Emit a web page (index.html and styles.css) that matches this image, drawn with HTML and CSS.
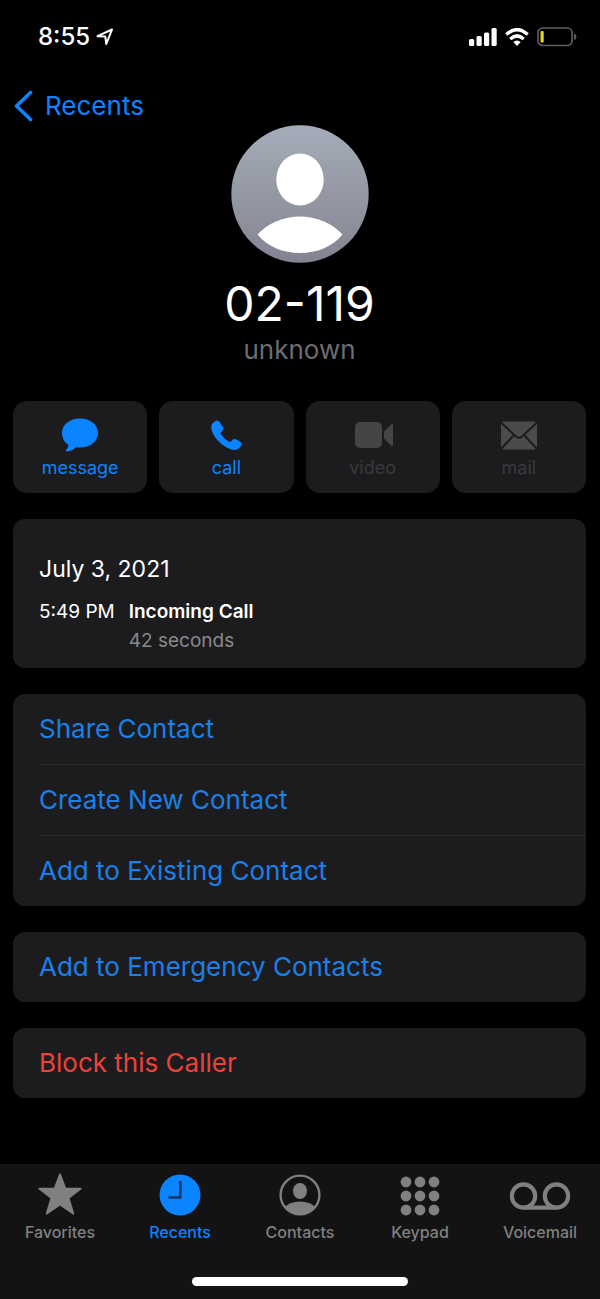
FILE: index.html
```html
<!DOCTYPE html>
<html lang="en">
<head>
<meta charset="utf-8">
<meta name="viewport" content="width=device-width, initial-scale=1">
<title>02-119</title>
<link rel="stylesheet" href="styles.css">
</head>
<body>
<div class="screen">
  <header class="status">
    <div class="status-group location">
      <time class="clock">8:55</time>
      <svg width="18" height="18" viewBox="0 0 18 18" fill="none" stroke="#fff" stroke-width="2" stroke-linejoin="round"><path d="M1.500 8.200 16 1.500 10.300 16 9.300 8.600Z"/></svg>
    </div>
    <div class="status-group">
      <svg width="28" height="18" viewBox="0 0 28 18" fill="#fff"><rect x="0" y="11" width="5.200" height="7" rx="1.500"/><rect x="7.500" y="8" width="5.200" height="10" rx="1.500"/><rect x="15" y="4.500" width="5.200" height="13.500" rx="1.500"/><rect x="22.500" y="0" width="5.200" height="18" rx="1.500"/></svg>
      <svg width="24" height="18" viewBox="0 0 24 18" fill="none" stroke="#fff" stroke-width="3.400"><path d="M1.300 6.500Q12-3.200 22.700 6.500"/><path d="M5.300 11Q12 4.800 18.700 11"/><path fill="#fff" stroke="none" d="M8.300 14.100Q12 11 15.700 14.100L12 18Z"/></svg>
      <svg width="40" height="20" viewBox="0 0 40 20"><rect x="1" y="1" width="34" height="17.500" rx="4.500" fill="none" stroke="#5d5d5d" stroke-width="1.700"/><rect x="3.500" y="4" width="3.200" height="11.500" rx="1" fill="#e4d51f"/><path d="M37 6.500Q39.500 7.200 39.500 9.800T37 13Z" fill="#5d5d5d"/></svg>
    </div>
  </header>

  <nav class="navbar">
    <a class="back" href="#recents">
      <svg width="19" height="32" viewBox="0 0 19 32" fill="none" stroke="#0a84ff" stroke-width="3.600" stroke-linecap="round" stroke-linejoin="round"><path d="M16.500 2.500 2.500 16 16.500 29.500"/></svg>
      Recents
    </a>
  </nav>

  <main class="content">
    <section class="profile">
      <svg class="avatar" viewBox="0 0 138 138">
        <defs><linearGradient id="shade" x1="0" y1="0" x2="0" y2="1"><stop offset="0" stop-color="#a6acb9"/><stop offset="1" stop-color="#838491"/></linearGradient></defs>
        <circle cx="69" cy="69" r="68.700" fill="url(#shade)"/>
        <ellipse cx="69" cy="54.500" rx="23.700" ry="26" fill="#fff"/>
        <path fill="#fff" d="M26.500 109.500C37 98 53 91.500 69 91.500S101 98 111.500 109.500C101 122 86 128 69 128S37 122 26.500 109.500Z"/>
      </svg>
      <h1 class="name">02-119</h1>
      <p class="label">unknown</p>
    </section>

    <div class="actions">
      <button class="action" type="button">
        <svg width="40" height="36" viewBox="0 0 40 36" fill="currentColor"><path d="M20 1.500C30.500 1.500 38 7.800 38 16S30.500 30.500 20 30.500Q18 30.500 16.300 30.200C13 33 9.500 34.500 6.500 34.500Q5 34 6.300 32.700 8.500 30.500 8.600 28C4.500 25.500 2 21 2 16 2 7.800 9.500 1.500 20 1.500Z"/></svg>
        message
      </button>
      <button class="action" type="button">
        <svg width="40" height="36" viewBox="0 0 40 36" fill="currentColor"><path d="M6.700 6.300 9.300 4Q11.500 2.500 13.400 4.800L17 10Q18.300 12.200 16.300 13.900L14.900 15.200Q14.300 16 15 17.200 18 22 23.300 24.700 24.200 25.100 25 24.400L26.500 22.800Q28.300 21.200 30.500 22.500L34.500 25.100Q36.600 26.800 35 29L32.700 31.600Q29.500 34.400 23.500 31.800C14.700 28 7.800 20.300 5.600 13.200Q4.500 8.700 6.700 6.300Z"/></svg>
        call
      </button>
      <button class="action" type="button" disabled>
        <svg width="40" height="36" viewBox="0 0 40 36" fill="#454547"><rect x="2" y="5" width="27" height="26" rx="5"/><path d="M31 14.500 38 7.500Q40 6 40 8.500V27.500Q40 30 38 28.500L31 21.500Z"/></svg>
        video
      </button>
      <button class="action" type="button" disabled>
        <svg width="40" height="36" viewBox="0 0 40 36"><rect x="2" y="4.500" width="36" height="28" rx="3" fill="#4b4b4d"/><path d="M2 5.500 17 19.500Q20 22 23 19.500L38 5.500M2 32 15 18M38 32 25 18" fill="none" stroke="#1c1c1e" stroke-width="2"/></svg>
        mail
      </button>
    </div>

    <section class="card history">
      <h2 class="date">July 3, 2021</h2>
      <div class="entry">
        <time>5:49 PM</time>
        <div><strong class="kind">Incoming Call</strong><p class="duration">42 seconds</p></div>
      </div>
    </section>

    <div class="card">
      <button class="row" type="button">Share Contact</button>
      <button class="row" type="button">Create New Contact</button>
      <button class="row" type="button">Add to Existing Contact</button>
    </div>
    <div class="card">
      <button class="row" type="button">Add to Emergency Contacts</button>
    </div>
    <div class="card">
      <button class="row danger" type="button">Block this Caller</button>
    </div>
  </main>

  <footer class="dock">
    <nav class="tabs">
      <a class="tab" href="#favorites">
        <svg width="46" height="44" viewBox="0 0 46 44" fill="currentColor" stroke="currentColor" stroke-width="2" stroke-linejoin="round"><path d="M23 2.500 28.300 16.700H43.500L31.500 26 36.200 41.500 23 32.500 9.800 41.500 14.500 26 2.500 16.700H17.700Z"/></svg>
        Favorites
      </a>
      <a class="tab active" href="#recents" aria-current="page">
        <svg width="42" height="44" viewBox="0 0 42 44"><circle cx="21" cy="23" r="20.500" fill="currentColor"/><path d="M21.300 9V25.500H9.500" fill="none" stroke="#0d3668" stroke-width="2.600"/></svg>
        Recents
      </a>
      <a class="tab" href="#contacts">
        <svg width="42" height="44" viewBox="0 0 42 44"><defs><clipPath id="ring"><circle cx="21" cy="23" r="19.500"/></clipPath></defs><circle cx="21" cy="23" r="19.400" fill="none" stroke="currentColor" stroke-width="2.400"/><ellipse cx="21" cy="19" rx="7" ry="8" fill="currentColor"/><path clip-path="url(#ring)" d="M5 36Q10 29.500 21 29.500T37 36L30 44H12Z" fill="currentColor"/></svg>
        Contacts
      </a>
      <a class="tab" href="#keypad">
        <svg width="40" height="44" viewBox="0 0 40 44" fill="currentColor"><circle cx="6" cy="10" r="5.400"/><circle cx="20" cy="10" r="5.400"/><circle cx="34" cy="10" r="5.400"/><circle cx="6" cy="24" r="5.400"/><circle cx="20" cy="24" r="5.400"/><circle cx="34" cy="24" r="5.400"/><circle cx="6" cy="38" r="5.400"/><circle cx="20" cy="38" r="5.400"/><circle cx="34" cy="38" r="5.400"/></svg>
        Keypad
      </a>
      <a class="tab" href="#voicemail">
        <svg width="60" height="44" viewBox="0 0 60 44" fill="none" stroke="currentColor" stroke-width="4.200"><circle cx="13.500" cy="24" r="11.700"/><circle cx="46.500" cy="24" r="11.700"/><path d="M13.500 35.700H46.500"/></svg>
        Voicemail
      </a>
    </nav>
    <div class="home-bar"></div>
  </footer>
</div>
</body>
</html>
```
FILE: styles.css
```css
* { box-sizing: border-box; }

body {
  margin: 0;
  background: #000;
  color: #fff;
  font-family: Inter, "Liberation Sans", sans-serif;
}

h1, h2, p { margin: 0; font-weight: 400; }
svg { display: block; flex: none; }
a { color: inherit; text-decoration: none; }
button { border: 0; background: none; font: inherit; cursor: pointer; }
button:disabled { cursor: default; }

.screen { min-height: 100vh; display: flex; flex-direction: column; }

.status {
  display: flex;
  justify-content: space-between;
  align-items: center;
  padding: 22px 23px 22px 38px;
}
.status-group { display: flex; align-items: center; gap: 8px; }
.location { gap: 6px; }
.clock { font-size: 24px; line-height: 30px; font-weight: 500; }

.navbar { padding: 16px 14px 0; }
.back {
  display: flex;
  width: fit-content;
  align-items: center;
  gap: 12px;
  color: #0a84ff;
  font-size: 26px;
  line-height: 32px;
}

.content {
  flex: 1;
  display: flex;
  flex-direction: column;
  gap: 26px;
  padding: 0 14px 32px 13px;
}

.profile {
  display: flex;
  flex-direction: column;
  align-items: center;
  margin-top: 3px;
  padding-bottom: 9px;
}
.avatar { width: 138px; height: 138px; }
.name { margin-top: 11px; font-size: 48px; line-height: 60px; }
.label { font-size: 26px; line-height: 32px; color: #6d6d70; }

.actions { display: grid; grid-template-columns: repeat(4, 1fr); gap: 12px; }
.action {
  display: flex;
  flex-direction: column;
  align-items: center;
  gap: 4px;
  padding: 16px 8px 14px;
  border-radius: 14px;
  background: #1c1c1e;
  color: #0a84ff;
  font-size: 18px;
  line-height: 22px;
}
.action:disabled { color: #3a3a3c; }

.card { border-radius: 12px; background: #1c1c1e; overflow: hidden; }

.history { padding: 34px 26px 13px; }
.date { font-size: 23px; line-height: 32px; }
.entry {
  display: flex;
  gap: 14px;
  margin-top: 12px;
  font-size: 19px;
  line-height: 29px;
}
.kind { font-weight: 600; }
.duration { color: #8a8a8d; }

.row {
  display: block;
  width: 100%;
  padding: 19px 26px;
  color: #1a80ea;
  font-size: 26px;
  line-height: 32px;
  text-align: left;
}
.row + .row {
  padding-top: 20px;
  background: linear-gradient(#2b2b2d, #2b2b2d) 26px 0 / 100% 1px no-repeat;
}
.danger { color: #ee4238; }

.dock { background: #131313; padding: 8px 0 13px; }
.tabs { display: grid; grid-template-columns: repeat(5, 1fr); }
.tab {
  display: flex;
  flex-direction: column;
  align-items: center;
  gap: 5px;
  color: #808080;
  font-size: 16px;
  line-height: 22px;
  font-weight: 500;
}
.active { color: #0a84ff; }
.home-bar {
  width: 36%;
  height: 9px;
  margin: 34px auto 0;
  border-radius: 5px;
  background: #fff;
}
```
